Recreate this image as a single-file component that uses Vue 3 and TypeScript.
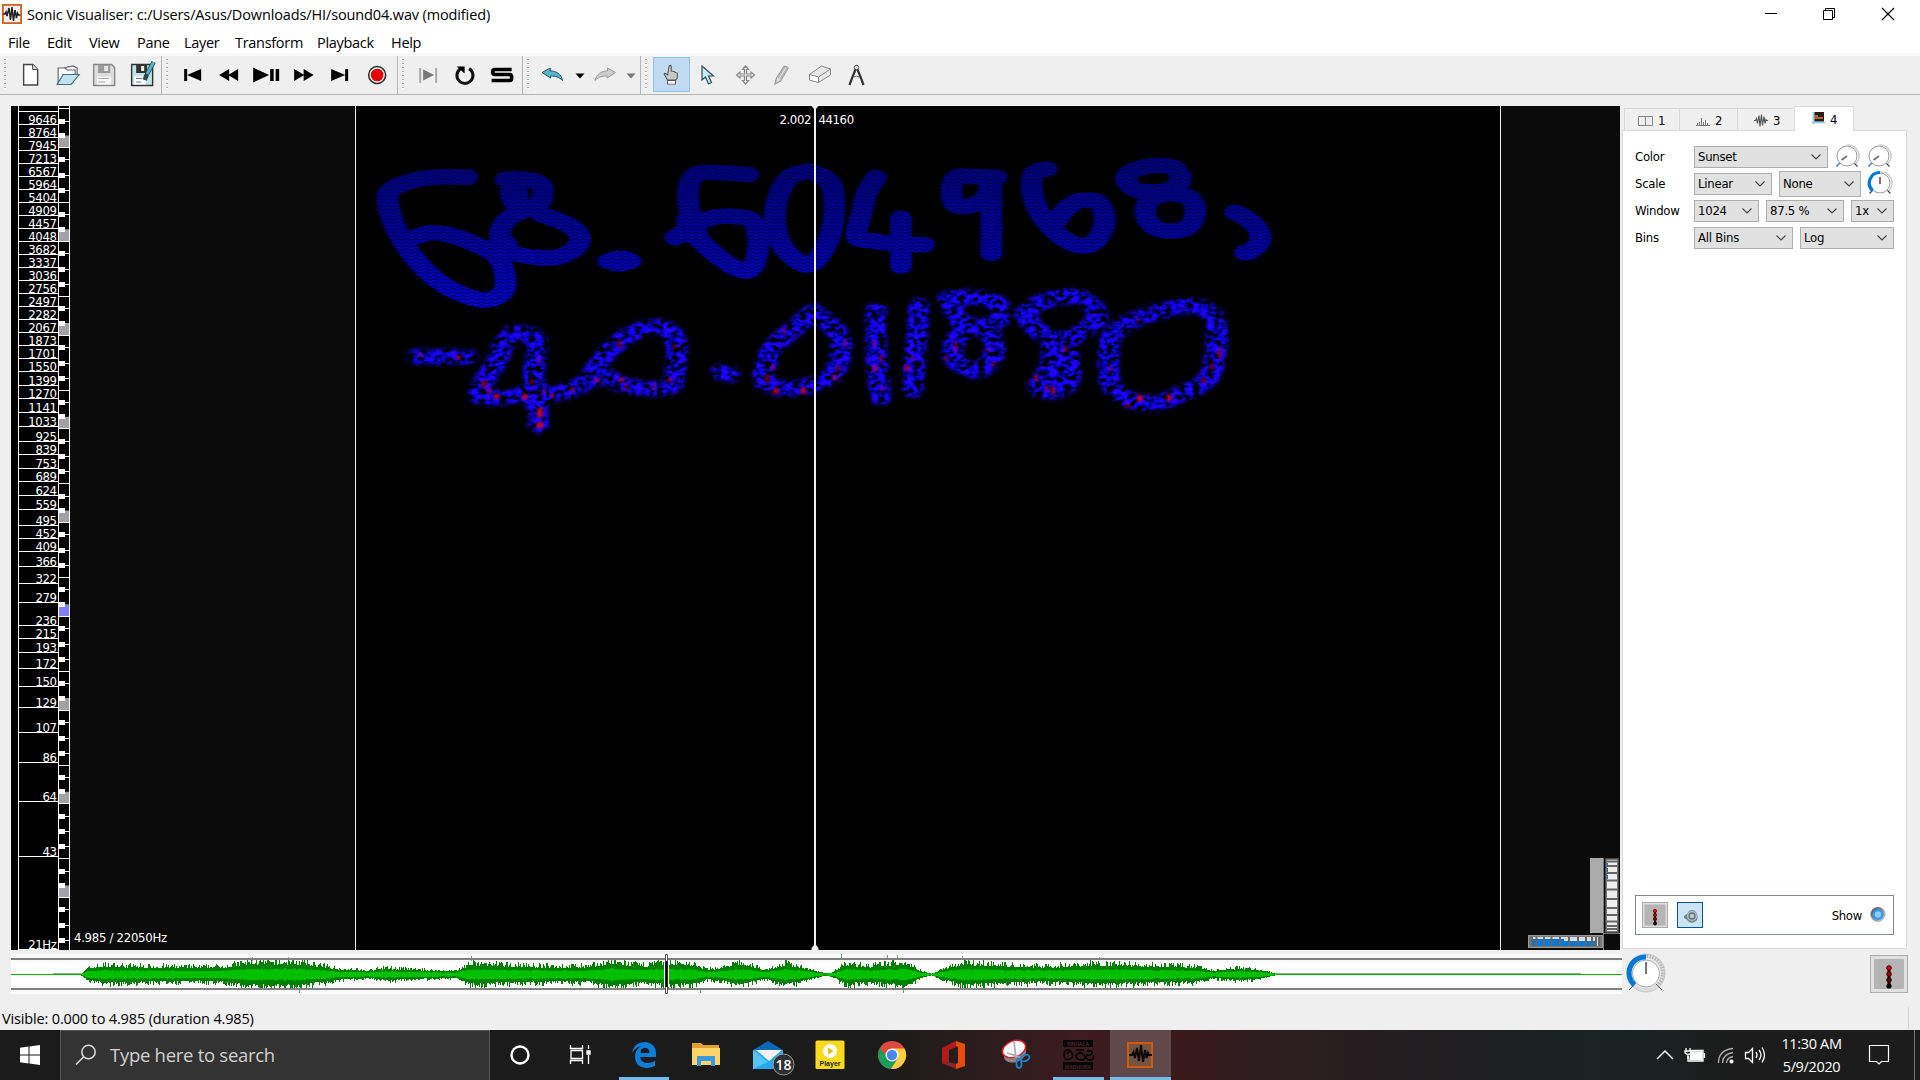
<script setup lang="ts">
type Pt = [number, number]

const menus = [
  { name: 'File', w: 39 }, { name: 'Edit', w: 42 }, { name: 'View', w: 48 }, { name: 'Pane', w: 47 },
  { name: 'Layer', w: 51 }, { name: 'Transform', w: 82 }, { name: 'Playback', w: 74 }, { name: 'Help', w: 40 },
]

// Frequency scale: label and the y of the rule below it
const scale: [string, number][] = [
  ['', 111], ['9646', 124], ['8764', 137], ['7945', 150], ['7213', 163], ['6567', 176], ['5964', 189], ['5404', 202],
  ['4909', 215], ['4457', 228], ['4048', 241], ['3682', 254], ['3337', 267], ['3036', 280], ['2756', 293], ['2497', 306],
  ['2282', 319], ['2067', 332], ['1873', 345], ['1701', 358], ['1550', 371], ['1399', 385], ['1270', 398], ['1141', 412],
  ['1033', 426], ['925', 441], ['839', 454], ['753', 468], ['689', 481], ['624', 495], ['559', 509], ['495', 525],
  ['452', 538], ['409', 551], ['366', 566], ['322', 583], ['279', 602], ['236', 625], ['215', 638], ['193', 652],
  ['172', 668], ['150', 686], ['129', 707], ['107', 732], ['86', 762], ['64', 801], ['43', 856], ['21Hz', 949],
]

// Piano strip: one octave is 93.75px tall
const octaves = Array.from({ length: 10 }, (_, i) => 135 + (i - 1) * 93.75)
const blackKeys = [0, 24.3, 40, 55, 79.3]
const whiteLines = [12, 67]

const BRUSH = 1.4
function stroke(points: Pt[]): string {
  const p = points.map(([x, y]): Pt => [x / BRUSH, y])
  let d = `M${p[0][0].toFixed(1)} ${p[0][1]}`
  for (let i = 0; i < p.length - 1; i++) {
    const a = p[Math.max(0, i - 1)]
    const b = p[i]
    const c = p[i + 1]
    const e = p[Math.min(p.length - 1, i + 2)]
    const c1 = [b[0] + (c[0] - a[0]) / 6, b[1] + (c[1] - a[1]) / 6]
    const c2 = [c[0] - (e[0] - b[0]) / 6, c[1] - (e[1] - b[1]) / 6]
    d += `C${c1[0].toFixed(1)} ${c1[1].toFixed(1)} ${c2[0].toFixed(1)} ${c2[1].toFixed(1)} ${c[0].toFixed(1)} ${c[1].toFixed(1)}`
  }
  return d
}
const shift = (pts: Pt[]): Pt[] => pts.map(([x, y]): Pt => [x + 1380, y])

const upper = ([
  [[322, 111], [230, 111], [140, 127], [88, 155], [86, 200], [110, 270], [160, 350], [230, 420], [310, 465], [380, 480], [430, 455], [434, 400], [410, 348], [340, 310], [270, 285], [210, 278], [170, 290]],
  [[436, 118], [500, 118], [540, 132], [549, 165], [530, 195], [490, 205], [460, 185], [452, 145], [455, 125]],
  [[470, 140], [475, 190]],
  [[500, 205], [440, 240], [420, 290], [450, 335], [530, 352], [600, 350], [650, 320], [658, 285], [620, 252], [550, 225], [510, 200]],
  [[395, 325], [440, 310]],
  [[745, 363], [780, 360], [812, 364]], [[765, 356], [795, 356]], [[768, 371], [790, 371]],
  [[1165, 103], [1080, 98], [1015, 100], [988, 130], [985, 190], [1000, 250], [1020, 300], [1075, 350], [1135, 388], [1172, 388], [1192, 340], [1192, 270], [1160, 234], [1060, 232], [990, 265], [945, 293]],
  [[980, 240], [1000, 290]],
  [[1350, 93], [1290, 110], [1255, 170], [1245, 240], [1262, 310], [1310, 362], [1350, 374], [1388, 335], [1415, 270], [1423, 190], [1408, 125], [1350, 93]],
  [[1190, 280], [1250, 270]],
] as Pt[][]).concat(([
  [[168, 113], [140, 160], [125, 220], [110, 290], [160, 303], [240, 313], [312, 314]],
  [[243, 235], [243, 378]],
  [[530, 112], [470, 110], [410, 112], [395, 150], [405, 193], [450, 197], [500, 170], [508, 130]],
  [[514, 115], [514, 230], [514, 340]],
  [[680, 87], [645, 97], [635, 140], [650, 200], [690, 260], [750, 307], [810, 315], [848, 270], [852, 220], [830, 185], [780, 182], [740, 205], [712, 240]],
  [[1078, 105], [1060, 82], [1000, 77], [940, 92], [918, 118], [950, 150], [1020, 155], [1075, 135], [1082, 105]],
  [[1040, 160], [990, 180], [976, 220], [1000, 260], [1050, 273], [1105, 260], [1127, 215], [1110, 175], [1060, 160]],
  [[1245, 217], [1280, 235], [1312, 265], [1320, 305], [1290, 334], [1275, 338]],
] as Pt[][]).map(shift)).map(stroke)

const lower = ([
  [[172, 650], [322, 650]],
  [[462, 577], [430, 615], [408, 670], [375, 720], [360, 768], [420, 772], [490, 765], [560, 765], [640, 745], [700, 715]],
  [[470, 577], [530, 600], [522, 690], [530, 780], [535, 855]],
  [[700, 700], [740, 640], [800, 590], [870, 560], [930, 572], [950, 620], [945, 700], [930, 740], [860, 745], [790, 735], [740, 710], [700, 690]],
  [[1083, 696], [1110, 704]],
  [[1360, 515], [1310, 560], [1250, 610], [1222, 660], [1213, 725], [1270, 745], [1360, 735], [1420, 700], [1443, 640], [1440, 590], [1400, 545], [1360, 515]],
] as Pt[][]).concat(([
  [[168, 512], [168, 640], [183, 772]],
  [[298, 498], [290, 600], [278, 750]],
  [[385, 475], [470, 472], [530, 490], [548, 525], [510, 552], [450, 558], [410, 530], [390, 480]],
  [[440, 560], [400, 615], [408, 665], [470, 692], [518, 655], [520, 600], [480, 560]],
  [[740, 468], [680, 480], [622, 515], [640, 560], [700, 595], [760, 590], [820, 550], [830, 515], [790, 478], [740, 468]],
  [[700, 600], [690, 680], [655, 740], [690, 755], [740, 735], [752, 680], [730, 600]],
  [[705, 650], [715, 740]],
  [[1085, 498], [1000, 520], [920, 550], [875, 590], [866, 660], [872, 730], [930, 780], [1010, 788], [1100, 755], [1165, 715], [1187, 640], [1190, 560], [1160, 508], [1085, 498]],
] as Pt[][]).map(shift)).map(stroke)

// Loudest bins, drawn in red: x, y, rx, ry, opacity
const peaks: number[][] = [
  [410, 769, 9, 8, .85], [495, 770, 9, 9, .85], [540, 818, 8, 15, .95], [540, 855, 10, 10, .95], [577, 768, 7, 7, .6],
  [710, 720, 9, 6, .65], [785, 720, 9, 8, .6], [930, 720, 9, 6, .55], [1248, 752, 9, 9, .8], [1330, 752, 9, 10, .8],
  [373, 733, 10, 12, .5], [388, 752, 8, 8, .5], [295, 652, 9, 7, .55], [180, 645, 7, 7, .4], [780, 612, 7, 12, .45],
  [1222, 715, 7, 14, .45], [1238, 683, 6, 9, .5], [1272, 573, 6, 10, .4], [945, 620, 7, 7, .45], [882, 742, 6, 12, .4],
  [638, 750, 8, 8, .45], [515, 725, 7, 8, .5], [552, 757, 7, 7, .5], [800, 742, 6, 12, .4], [538, 660, 6, 10, .35],
  [1425, 712, 9, 9, .5], [1435, 685, 8, 8, .5], [1457, 610, 7, 9, .45], [1545, 685, 8, 10, .65], [1563, 655, 6, 12, .45],
  [1543, 610, 6, 9, .45], [1567, 745, 7, 7, .4], [1642, 684, 8, 9, .7], [1657, 655, 6, 8, .45], [1787, 620, 7, 18, .4],
  [1885, 630, 6, 6, .5], [1900, 672, 7, 7, .5], [1758, 655, 6, 7, .5], [2028, 714, 7, 9, .6], [2080, 752, 8, 12, .6],
  [2062, 745, 7, 9, .5], [2115, 628, 7, 9, .5], [2340, 775, 9, 10, .9], [2428, 773, 8, 10, .9], [2579, 640, 6, 17, .6],
  [2305, 795, 8, 7, .5], [2532, 722, 8, 8, .5], [2555, 680, 6, 10, .45], [2252, 685, 7, 8, .4], [2333, 540, 7, 6, .4],
]

// Overview waveform, built from an amplitude envelope
const envelope: Pt[] = [
  [81, .5], [88, 7], [105, 10], [140, 9], [200, 8], [225, 9], [250, 14], [270, 13], [295, 14], [320, 10], [340, 6], [368, 4],
  [385, 7], [420, 5], [455, 3.5], [470, 12], [510, 10], [550, 9], [590, 9], [610, 14], [640, 10], [665, 13], [690, 12], [705, 6],
  [720, 7], [740, 13], [765, 5], [785, 12], [800, 9], [824, 1], [832, 2], [845, 12], [870, 9], [905, 14], [920, 4], [931, .5],
  [945, 7], [965, 13], [1010, 10], [1050, 9], [1100, 12], [1150, 10], [1195, 9], [1212, 4], [1240, 7], [1260, 5], [1275, .5],
]
function amp(x: number): number {
  for (let i = 1; i < envelope.length; i++) {
    const [x0, a0] = envelope[i - 1]
    const [x1, a1] = envelope[i]
    if (x <= x1) return a0 + ((a1 - a0) * (x - x0)) / (x1 - x0)
  }
  return 0
}
let seed = 7
function rand(): number {
  seed = (seed * 16807) % 2147483647
  return seed / 2147483647
}
let peakPath = ''
let meanPath = ''
for (let x = 81; x <= 1275; x++) {
  const a = amp(x)
  const up = Math.min(14, Math.round(a * (.68 + rand() ** 2 * .55)))
  const down = Math.min(13, Math.round(a * (.68 + rand() ** 2 * .55)))
  const m = Math.round(a * (.32 + rand() * .1))
  peakPath += `M${x + .5} ${974 - up}V${975 + down}`
  meanPath += `M${x + .5} ${974 - m}V${975 + m}`
}

interface Combo { text: string; w: number; tall?: boolean }
const rows: { label: string; combos: Combo[]; dials: string[] }[] = [
  { label: 'Color', combos: [{ text: 'Sunset', w: 134 }], dials: ['low', 'low'] },
  { label: 'Scale', combos: [{ text: 'Linear', w: 78 }, { text: 'None', w: 82, tall: true }], dials: ['mid'] },
  { label: 'Window', combos: [{ text: '1024', w: 65 }, { text: '87.5 %', w: 78 }, { text: '1x', w: 43 }], dials: [] },
  { label: 'Bins', combos: [{ text: 'All Bins', w: 99 }, { text: 'Log', w: 94 }], dials: [] },
]
const ticks = Array.from({ length: 14 }, (_, i) => 5 + i * 9.5)
</script>

<template>
  <div class="screen">
    <header class="title">
      <svg width="20" height="20" viewBox="0 0 20 20"><rect x=".9" y=".9" width="18.2" height="18.2" fill="#f4f0ec" stroke="#d2601c" stroke-width="1.8"/><path d="M1 10h2l1-2 1 4 2-8 1.500 12 1.500-13 1.500 14 1.500-11 1.500 8 1-5 1 2h2" fill="none" stroke="#222" stroke-width="1.5"/></svg>
      <span class="caption">Sonic Visualiser: c:/Users/Asus/Downloads/HI/sound04.wav (modified)</span>
      <svg class="winbtns" width="160" height="28" viewBox="1760 0 160 28" fill="none" stroke="#000"><path d="M1765 13.500h12M1823.500 10.500h9v9h-9zM1825.500 10.500v-2h9v9h-2"/><path d="M1882 8l12 12M1894 8l-12 12" stroke-width="1.2"/></svg>
    </header>
    <nav class="menu"><span v-for="m in menus" :key="m.name" :style="{ width: m.w + 'px' }">{{ m.name }}</span></nav>

    <div class="toolbar">
      <div class="group g1"><i class="grip"/>
        <svg class="tb" viewBox="-1 0 37 38"><path d="M11.500 8.500h9l5 5v15.500h-14z" fill="#fff" stroke="#444" stroke-width="1.4"/><path d="M20.500 8.500v5h5" fill="#ddd" stroke="#444"/></svg>
        <svg class="tb" viewBox="-1 0 37 38"><path d="M9 28.500V12h7l2 2h8v5M14 12l10-2 4 2v6" fill="#fff" stroke="#667" stroke-width="1.2"/><path d="M8 28.500l6-10h16l-8 10z" fill="#bfe4f0" stroke="#456a78" stroke-width="1.2"/></svg>
        <svg class="tb" viewBox="1 0 37 38"><path d="M8.500 8.500h18l3 3v18h-21z" fill="#ddd" stroke="#888" stroke-width="1.4"/><path d="M13 9h12v8H13z" fill="#999"/><path d="M19 10h4v5h-4z" fill="#e8e8e8"/><path d="M12 20.500h14v8H12z" fill="#f6f6f6"/><path d="M13 22.500h11M13 26h7" stroke="#aaa"/></svg>
        <svg class="tb" viewBox="0 0 37 38"><path d="M8.500 8.500h18l3 3v18h-21z" fill="#c4e3ed" stroke="#333" stroke-width="1.4"/><path d="M13 9h11v8H13z" fill="#333"/><path d="M18 10h3v5h-3z" fill="#eee"/><path d="M11 20.500h12v8H11z" fill="#fff"/><path d="M13 22.500h6M13 26h5" stroke="#777"/><path d="M30.500 6l-7 13-2 5" stroke="#34454d" stroke-width="4.500" fill="none"/><path d="M30.500 6l-6.500 12" stroke="#4bb2cf" stroke-width="2.800"/></svg>
      </div>
      <div class="group g2"><i class="grip"/>
        <svg class="tb" viewBox="0 0 37 38"><path d="M11 13h3v12h-3zM28 13v12L14 19z"/></svg>
        <svg class="tb" viewBox="0 0 37 38"><path d="M19 13v12L9 19zM28 13v12L18 19z"/></svg>
        <svg class="tb" viewBox="0 0 37 38"><path d="M5 11.500v15L21 19zM22 13h3.500v12H22zM27.500 13H31v12h-3.500z"/></svg>
        <svg class="tb" viewBox="0 0 37 38"><path d="M9 13v12l10-6zM18.500 13v12l10-6z"/></svg>
        <svg class="tb" viewBox="0 0 37 38"><path d="M9 13v12l14-6zM23 13h3v12h-3z"/></svg>
        <svg class="tb" viewBox="0 0 37 38"><circle cx="18" cy="19" r="8.500" fill="#eee" stroke="#292929" stroke-width="1.5"/><circle cx="18" cy="19" r="6.300" fill="#e50000"/></svg>
      </div>
      <div class="group g3"><i class="grip"/>
        <svg class="tb" viewBox="0 0 37 38"><path d="M10 12h2v15h-2zM26 12h2v15h-2z" fill="#aaa"/><path d="M14 13.500v11l11-5.500z" fill="#777"/></svg>
        <svg class="tb" viewBox="0 0 37 38"><path d="M14 13A8 8 0 1 0 23 12.600" fill="none" stroke="#111" stroke-width="3"/><path d="M10.500 10.500h8v7z"/></svg>
        <svg class="tb" viewBox="1 0 37 38"><path d="M28.500 13.500H12q-2.500 0-2.500 2.500t2.500 2.500h14.500q2 0 2 3t-2 3H8.500" fill="none" stroke="#000" stroke-width="3.700"/></svg>
      </div>
      <div class="group g4"><i class="grip"/>
        <svg class="tb" viewBox="0 0 37 38"><path d="M8 16.500l8-4.500v3c6 0 11 3 12.500 9.500-4-3.500-7-4.500-12-4.500v2z" fill="#52b8d4" stroke="#27505d"/></svg>
        <svg class="tb arrow" viewBox="0 0 18 38"><path d="M4.500 17.500h9l-4.500 5z"/></svg>
        <svg class="tb redo" viewBox="0 0 33 38"><path d="M26.500 16.500l-8-4.500v3c-6 0-11 3-12.500 9.500 4-3.500 7-4.500 12-4.500v2z" fill="#ccc" stroke="#9a9a9a"/></svg>
        <svg class="tb arrow" viewBox="0 0 18 38"><path d="M4.500 17.500h9l-4.500 5z" fill="#777"/></svg>
      </div>
      <div class="group g5"><i class="grip"/>
        <svg class="tb on" viewBox="0 0 37 38"><path d="M14 25.500l-4-7q1-2 4 1V20l1.700-10.500q1.600-2 2.500 0V15l3 .5 4 2v5.500l-2 2.500zM14 26h9v4h-9z" fill="#c8c8c8" stroke="#555" stroke-width="1.2"/><path d="M14.500 26.500h8v3h-8z" fill="#fff"/></svg>
        <svg class="tb" viewBox="1 0 37 38"><path d="M13 10v14l3.500-3 3 7 3-1.500-3-6.500h5z" fill="#c4edf5" stroke="#334b53" stroke-width="1.2"/></svg>
        <svg class="tb" viewBox="0 0 37 38"><path d="M18.500 10l3 3.500h-2V18h4.500v-2l3.500 3-3.500 3v-2h-4.500v4.500h2l-3 3.500-3-3.500h2V20H13v2l-3.500-3 3.500-3v2h4.500v-4.500h-2z" fill="#eee" stroke="#888" stroke-width="1.2"/></svg>
        <svg class="tb" viewBox="1 0 37 38"><path d="M12 28l1.500-6L21 10.500q3-.5 4 2L17.500 25z" fill="#ddd" stroke="#a0a0a0" stroke-width="1.3"/><path d="M15 22L22 11M17 23l7-11" stroke="#aaa"/></svg>
        <svg class="tb" viewBox="0 0 37 38"><path d="M8.500 18.500l12-8.500 9 3v6l-12 7.500-9-2.500z" fill="#e6e6e6" stroke="#888"/><path d="M8.500 18.500l9 2.500 12-8M17.500 21v5.500" fill="none" stroke="#888"/><path d="M9.200 19.200l7.800 2.300v4.200l-7.800-2.200z" fill="#fff"/></svg>
        <svg class="tb" viewBox="0 0 37 38"><circle cx="18.500" cy="11.500" r="2.200" fill="#eee" stroke="#444"/><path d="M17.500 13.500l-4 10-2 5.500M19.500 13.500l4 10 2 5.500" stroke="#333" stroke-width="2.200" fill="none"/><path d="M16 21q2.500-2 5 0" fill="none" stroke="#777"/></svg>
      </div>
    </div>

    <main class="work">
      <svg class="pane" width="1609" height="844" viewBox="11 106 1609 844">
        <defs>
          <filter id="noise" filterUnits="userSpaceOnUse" x="380" y="280" width="900" height="160" color-interpolation-filters="sRGB">
            <feTurbulence type="fractalNoise" baseFrequency=".14 .21" numOctaves="2" seed="4" result="t"/>
            <feColorMatrix in="t" values="0.5 0 0 0 -0.22  0 0 0 0 0  3.7 0 0 0 -1.2  0 0 0 0 1" result="c"/>
            <feGaussianBlur in="SourceAlpha" stdDeviation="2.3" result="s"/>
            <feComposite in="c" in2="s" operator="in"/>
          </filter>
          <filter id="soft" filterUnits="userSpaceOnUse" x="360" y="140" width="940" height="190"><feGaussianBlur stdDeviation="1.3 .3"/></filter>
          <filter id="spot" filterUnits="userSpaceOnUse" x="360" y="280" width="940" height="160"><feGaussianBlur stdDeviation=".9"/></filter>
          <linearGradient id="depth" gradientUnits="userSpaceOnUse" x1="0" y1="70" x2="0" y2="500"><stop offset="0" stop-color="#00004a"/><stop offset="1" stop-color="#000048"/></linearGradient>
          <linearGradient id="hi" gradientUnits="userSpaceOnUse" x1="0" y1="70" x2="0" y2="500"><stop offset="0" stop-color="#000088"/><stop offset=".5" stop-color="#0000b8"/><stop offset="1" stop-color="#0808ff"/></linearGradient>
          <pattern id="zig" patternUnits="userSpaceOnUse" width="20" height="10"><path d="M-10 7L0 0l10 7 10-7 10 7M-10 17L0 10l10 7 10-7 10 7M-10-3L0-10l10 7 10-7 10 7" fill="none" stroke="#fff" stroke-width="4.200"/></pattern>
          <mask id="weave" maskUnits="userSpaceOnUse" x="0" y="0" width="2100" height="600"><rect width="2100" height="600" fill="url(#zig)"/></mask>
        </defs>
        <rect x="11" y="106" width="1609" height="844" fill="#0b0b0b"/>
        <rect x="355" y="106" width="1146" height="844" fill="#000"/>
        <path d="M355.500 106v844M1500.500 106v844" stroke="#f0f0f0"/>

        <g filter="url(#soft)" fill="none" stroke-linecap="round" stroke-linejoin="round">
          <g transform="translate(360 140) scale(.46667 .33333)">
            <path v-for="(d, i) in upper" :key="i" :d="d" stroke="url(#depth)" stroke-width="47"/>
            <g mask="url(#weave)"><path v-for="(d, i) in upper" :key="i" :d="d" stroke="url(#hi)" stroke-width="46"/></g>
          </g>
        </g>
        <g filter="url(#noise)" fill="none" stroke-linecap="round" stroke-linejoin="round">
          <g transform="translate(360 140) scale(.46667 .33333)"><path v-for="(d, i) in lower" :key="i" :d="d" stroke="#00f" stroke-width="46"/></g>
        </g>
        <g filter="url(#spot)"><g transform="translate(360 140) scale(.33333)">
          <ellipse v-for="(p, i) in peaks" :key="i" :cx="p[0]" :cy="p[1]" :rx="p[2]" :ry="p[3]" :opacity="p[4]" fill="#d8001c"/>
        </g></g>

        <path d="M814 106h2v844h-2zM811.500 106h7l-3.500 4zM811.500 950v-2l3.500-4 3.500 4v2z" fill="#f0f0f0"/>
        <text class="mono" x="811" y="124" text-anchor="end">2.002</text>
        <text class="mono" x="818.500" y="124">44160</text>
        <text class="mono foot" x="74" y="942">4.985 / 22050Hz</text>

        <rect x="11" y="106" width="58" height="844" fill="#000"/>
        <path d="M18.500 106v844M58.500 106v844M69.500 106v844" stroke="#fff"/>
        <g v-for="s in scale" :key="s[1]">
          <path :d="`M18 ${s[1] + .5}h41`" stroke="#fff"/>
          <text class="mono" x="56.500" :y="s[1] - .5" text-anchor="end">{{ s[0] }}</text>
        </g>
        <g v-for="(o, i) in octaves" :key="i">
          <rect x="59" :y="o + .5" width="10" height="12" :fill="i === 6 ? '#8080ff' : '#a2a2a6'"/>
          <path v-for="w in whiteLines" :key="w" :d="`M59 ${Math.round(o + w) + .5}h10`" stroke="#fff"/>
          <template v-for="b in blackKeys" :key="b">
            <rect x="59" :y="Math.round(o + b) - 2" width="6" height="5" fill="#fff"/>
            <path v-if="b" :d="`M65 ${Math.round(o + b) + .5}h4`" stroke="#fff"/>
          </template>
        </g>

        <rect x="1590" y="858" width="13" height="75" fill="#aaa"/>
        <path d="M1603.500 858v92M1603 933.500h17" stroke="#777"/>
        <rect x="1605.500" y="858.500" width="13" height="74" fill="#777" stroke="#444"/>
        <rect x="1607" y="860" width="10" height="71" fill="#eee"/>
        <path d="M1607 861.500h10M1607 866h10M1607 873h10M1607 880.500h10M1607 889.500h10M1607 899h10M1607 908h10M1607 915h10M1607 921.500h10M1607 926h10M1607 929h10" stroke="#666" stroke-width="2"/>
        <path d="M1607.500 863v3M1607.500 868v4M1607.500 875v4" stroke="#0078d7"/>
        <rect x="1528.500" y="935.500" width="74" height="12" fill="#777" stroke="#999"/>
        <rect x="1531" y="937" width="69" height="9" fill="#ddd"/><rect x="1533" y="939" width="31" height="7" fill="#0078d7"/><rect x="1563" y="941" width="34" height="5" fill="#0078d7"/>
        <path d="M1532 937v9M1536.500 937v9M1544 937v9M1551.500 937v9M1560 937v9M1569 937v9M1578 937v9M1586 937v9M1592 937v9M1596 937v9M1599 937v9" stroke="#666" stroke-width="2"/>
      </svg>

      <aside class="side">
        <div class="tabs">
          <div class="tab t1"><svg width="15" height="12" viewBox="0 0 15 12"><path d="M.5 1.500h14v9H.5zM7.500 1.500v9" fill="#eee" stroke="#888"/></svg>1</div>
          <div class="tab t2"><svg width="14" height="12" viewBox="0 0 14 12"><path d="M0 10.500h14M1.500 10V8M3.500 10V7M5.500 10V3M7.500 10V7M9.500 10V5M11.500 10V8" stroke="#777"/></svg>2</div>
          <div class="tab t3"><svg width="14" height="13" viewBox="0 0 14 13"><path d="M0 6.500h1.500l1-2 1 5 1.500-8 1 11L7.500.5l1 11 1.500-9 1 7 1-4 .5 1h1.500" stroke="#555" fill="none" stroke-width="1.100"/></svg>3</div>
          <div class="tab t4"><svg width="13" height="12" viewBox="0 0 13 12"><path d="M1.500 0v12M0 10.500h13" stroke="#8fd6ea" stroke-width="2"/><path d="M2.500 0H12v9.500H2.500z" fill="#2a1c12"/><path d="M3 3h3v2h5v2H3z" fill="#b5651d"/></svg>4</div>
        </div>
        <section class="props">
          <div v-for="r in rows" :key="r.label" class="row">
            <label>{{ r.label }}</label>
            <div v-for="c in r.combos" :key="c.text" class="combo" :class="{ tall: c.tall }" :style="{ width: c.w + 'px' }">
              <span>{{ c.text }}</span><svg width="10" height="6" viewBox="0 0 10 6"><path d="M.5.5L5 5 9.500.5" fill="none" stroke="#444" stroke-width="1.100"/></svg>
            </div>
            <svg v-for="(k, i) in r.dials" :key="i" class="dial" width="26" height="26" viewBox="0 0 26 26" fill="none">
              <circle cx="13" cy="14" r="10" fill="#fff" stroke="#999"/><path d="M13 3A11 11 0 0 1 21.500 22" stroke="#ccc" stroke-width="1.500"/>
              <path d="M20.500 21.500l3 3M5.500 21.500l-3 3" stroke="#444" stroke-width="1.200"/>
              <path v-if="k === 'low'" d="M13 14l-5.500 4" stroke="#777" stroke-width="2"/>
              <path v-if="k === 'low'" d="M6 20.500l-3 3" stroke="#5ba7e6" stroke-width="1.500"/>
              <template v-else><path d="M13 3.500A10.500 10.500 0 0 0 5.500 21.500" stroke="#0078d7" stroke-width="3.200"/><path d="M13 8v7" stroke="#777" stroke-width="2"/></template>
            </svg>
          </div>
          <div class="playbox">
            <svg width="26" height="26" viewBox="0 0 26 26"><rect x=".5" y=".5" width="25" height="25" fill="#ddd" stroke="#aaa"/><rect x="2.500" y="2.500" width="21" height="21" fill="#b4b4b4"/><path d="M13 8v13" stroke="#400" stroke-width="2"/><circle cx="13" cy="9" r="1.700" fill="#e00" stroke="#300" stroke-width=".6"/><circle cx="13" cy="13" r="1.700" fill="#a00" stroke="#300" stroke-width=".6"/><circle cx="13" cy="17" r="1.700" fill="#600" stroke="#300" stroke-width=".6"/><circle cx="13" cy="21.500" r="2"/></svg>
            <svg width="26" height="26" viewBox="0 0 26 26"><rect x=".5" y=".5" width="25" height="25" fill="#cce4f7" stroke="#005499"/><path d="M7 14q3-1 5-5 3-2 6 0 4 4 2 9-3 4-8 2-2-3-5-4z" fill="#74858c"/><circle cx="15" cy="14" r="5" fill="#b9c8cd"/><circle cx="15" cy="14" r="3" fill="none" stroke="#61727a" stroke-width="1.300"/></svg>
            <span>Show</span>
            <svg width="18" height="18" viewBox="0 0 18 18"><defs><linearGradient id="rim" x2="1" y2="1"><stop stop-color="#444"/><stop offset="1" stop-color="#ddd"/></linearGradient></defs><circle cx="9" cy="8.500" r="7.500" fill="url(#rim)"/><circle cx="9" cy="8.500" r="5.400" fill="#2f98f8"/><circle cx="9" cy="8.500" r="3.200" fill="#8ecbff"/></svg>
          </div>
        </section>
      </aside>
    </main>

    <div class="overview">
      <svg width="1611" height="40" viewBox="11 954 1611 40">
        <rect x="11" y="954" width="1611" height="40" fill="#fafafa"/><rect x="11" y="963" width="1611" height="22" fill="#fff"/>
        <path d="M11 974.500h1611" stroke="#00b400"/><path d="M53 973.500h29M1275 973.500h306" stroke="#8ab58a"/>
        <path d="M252.500 957v4M288.500 957v4M299.500 988v5M471.500 956v5M700.500 988v5M841.500 954v6M887.500 955v5M897.500 955v5M903.500 989v4M962.500 956v4M1099.500 957v3" stroke="#60a860"/>
        <path d="M11 959h1611M11 989h1611" stroke="#808080" stroke-width="2"/>
        <path :d="peakPath" stroke="#008000"/><path :d="meanPath" stroke="#00c000"/>
        <path d="M664.500 961v26M668.500 961v26" stroke="#fff"/><path d="M665.500 954.500h2v39h-2z" fill="#fff" stroke="#555"/><path d="M666.500 961v26" stroke="#000" stroke-width="2"/>
      </svg>
      <svg class="bigdial" width="42" height="42" viewBox="1625 952 42 42" fill="none">
        <circle cx="1646" cy="973" r="17" stroke="#ddd" stroke-width="4"/>
        <path v-for="t in ticks" :key="t" d="M1646 954v4" stroke="#aaa" :transform="`rotate(${t} 1646 973)`"/>
        <circle cx="1646" cy="973.500" r="13.500" fill="#fff" stroke="#aaa"/><circle cx="1646" cy="973" r="19" stroke="#bbb" stroke-width=".7"/>
        <path d="M1646 957A16 16 0 0 0 1634.500 985" stroke="#0078d7" stroke-width="5"/><path d="M1633 986l-4 4M1656 984l6 6" stroke="#555"/><path d="M1646 962v12" stroke="#777" stroke-width="2"/>
      </svg>
      <svg class="level" width="38" height="38" viewBox="0 0 38 38"><rect x=".5" y=".5" width="37" height="37" fill="#e1e1e1" stroke="#adadad"/><rect x="4" y="4" width="30" height="30" rx="1" fill="#b4b4b4"/><path d="M19 12v20" stroke="#300" stroke-width="3"/><circle cx="19" cy="13" r="2.300" fill="#e00" stroke="#300"/><circle cx="19" cy="19" r="2.300" fill="#a00" stroke="#300"/><circle cx="19" cy="25" r="2.300" fill="#600" stroke="#200"/><circle cx="19" cy="31" r="2.600"/></svg>
    </div>

    <footer class="status"><span>Visible: 0.000 to 4.985 (duration 4.985)</span></footer>

    <div class="taskbar">
      <div class="start"><svg width="20" height="20" viewBox="0 0 20 20" fill="#fff"><path d="M0 2.800L8.500 1.600v7.900H0zM9.500 1.500L20 0v9.500H9.500zM0 10.500h8.500v7.900L0 17.200zM9.500 10.500H20V20L9.500 18.500z"/></svg></div>
      <div class="search"><svg width="22" height="22" viewBox="0 0 22 22" fill="none" stroke="#ddd" stroke-width="1.500"><circle cx="13.500" cy="8" r="6.700"/><path d="M8.700 12.800L1 20.500"/></svg><span>Type here to search</span></div>
      <svg class="apps" width="682" height="50" viewBox="490 1030 682 50">
        <circle cx="520" cy="1055" r="8.500" fill="none" stroke="#fff" stroke-width="2.400"/>
        <g fill="none" stroke="#fff" stroke-width="1.300"><path d="M570.500 1045v3.500h12v-3.500M570.500 1064v-3.500h12v3.500M571 1050.500h11.500v8H571zM588.500 1045v4M588.500 1055v9"/><path d="M587 1051h3v3h-3z" fill="#fff"/></g>
        <path d="M632 1053q2-11 13-11 11 1 11 12v3h-16q1 6 8 6 4 0 7-2v5q-4 2-9 2-11-1-11-11 0-7 6-11-5 1-9 7zM640.500 1053h9q0-5-4.500-5t-4.500 5z" fill="#0b7fd8" fill-rule="evenodd"/>
        <path d="M692 1043h9l2 2h16v20h-27z" fill="#e0a030"/><path d="M692 1048h28v17h-28z" fill="#ffd568"/><path d="M697 1066v-10h18v10h-4v-5h-10v5z" fill="#3a99dd"/>
        <path d="M753 1050l15-9 15 9v19h-30z" fill="#0a68b5"/><path d="M753 1050h30v19h-30z" fill="#25a8ee"/><path d="M756 1050h26l-13 11z" fill="#f3f3f3"/><path d="M753 1050l15 12-15 7z" fill="#55c4f7"/>
        <circle cx="783.500" cy="1064.500" r="10.500" fill="#303030" stroke="#999"/><text x="783.500" y="1069.500" class="badge" text-anchor="middle">18</text>
        <rect x="815.500" y="1040.500" width="29" height="28.500" rx="1.500" fill="#fbd91c"/><circle cx="830" cy="1051" r="7" fill="#fff"/><path d="M828 1047.500v7l5.500-3.500z" fill="#e5bd00"/><text x="830" y="1066" class="player" text-anchor="middle">Player</text>
        <circle cx="892" cy="1055" r="14" fill="#dd4b3e"/><path d="M880 1048a14 14 0 0 0 11 21l7-11-6-3-6 1z" fill="#199f58"/><path d="M892 1048.500h12.500A14 14 0 0 1 891 1069l7-11z" fill="#fdce42"/><circle cx="892" cy="1055" r="6.500" fill="#fff"/><circle cx="892" cy="1055" r="5.200" fill="#4688f1"/>
        <path d="M942 1048l14-7v6l-7 3v12l-7 2z" fill="#b31b1b"/><path d="M956 1041l9 3v22l-9 3v-5l2-1v-16l-2-1z" fill="#e84b0b"/><path d="M942 1063l6-1 8 2v5z" fill="#8d2424"/>
        <g transform="rotate(-22 1014 1049)"><ellipse cx="1013" cy="1054" rx="11.500" ry="8" fill="#8d8585"/><ellipse cx="1014" cy="1049" rx="12" ry="8" fill="#fff" stroke="#db1d2c" stroke-width="1.500"/></g><path d="M1014 1042l2 16M1007 1053l13 4" stroke="#aaa" stroke-width="1.700"/><g fill="none" stroke="#1685d0" stroke-width="1.800"><ellipse cx="1019" cy="1063.500" rx="2.500" ry="4.500"/><ellipse cx="1025" cy="1058" rx="4.500" ry="3" transform="rotate(-20 1025 1058)"/></g>
        <g fill="#090707"><path d="M1063 1040h30v7h-30zM1063 1062h30v8h-30z"/></g><g fill="none" stroke="#0b0606" stroke-width="1.800"><path d="M1070 1050q-6-1-6 5t6 4q4-2 2-6t-5 1M1076 1050h8M1076 1055q5-4 8 0t-2 5q-6 0-6-5M1087 1051q6-1 5 2t-5 2q-2 5 3 5t3-5"/></g>
        <text x="1078" y="1046" class="tiny" text-anchor="middle">SINHALA</text><text x="1078" y="1068.500" class="tiny" text-anchor="middle">MADHURA</text>
        <rect x="1110" y="1030" width="61" height="50" fill="#61484a"/><rect x="1128" y="1043" width="24" height="24" fill="#76543f" stroke="#d25b0a" stroke-width="2"/><path d="M1129 1055h3l1.500-3 1.500 6 2-10 2 13 2-16 2 17 2-12 1.500 8 1.500-5 1 2h3" fill="none" stroke="#0a0a0a" stroke-width="2"/>
        <path d="M619 1077h50v3h-50zM1053 1077h51v3h-51zM1110 1077h61v3h-61z" fill="#76b9ed"/>
      </svg>
      <div class="tray">
        <svg width="122" height="50" viewBox="1652 1030 122 50" fill="none" stroke="#fff" stroke-width="1.300">
          <path d="M1657 1059l8-8 8 8" stroke-width="1.500"/>
          <path d="M1690.500 1050.500h12.500v10.500h-15v-5M1704.500 1053v5"/><path d="M1691 1052h11v7.500h-12z" fill="#fff"/><path d="M1686 1048v3M1690 1048v3M1685 1051h6v2q-3 3-6 0zM1688 1055v4"/>
          <g stroke="#aaa"><path d="M1718.500 1063q0-13 14.500-14.500M1722.500 1063q0-9 10.500-10.500M1726.500 1063q0-5 6.500-6.500"/></g><circle cx="1731.500" cy="1061.500" r="1.400" fill="#fff"/>
          <path d="M1745.500 1052.500h3l4-4v14l-4-4h-3zM1756 1052q2 3 0 6M1759 1050q4 5 0 10M1762 1047.500q5 7.500 0 15"/>
        </svg>
        <div class="clock"><span>11:30 AM</span><span>5/9/2020</span></div>
        <svg class="note" width="22" height="22" viewBox="0 0 22 22"><path d="M1.500 1.500h19v16h-7l-2.500 2.500-2.500-2.500h-7z" fill="none" stroke="#fff" stroke-width="1.200"/></svg>
      </div>
    </div>
  </div>
</template>

<style>
body { margin: 0; background: #efefef; overflow: hidden; }
</style>
<style scoped>
.screen { width: 1920px; height: 1080px; display: flex; flex-direction: column; background: #efefef; font-family: "Open Sans", "Noto Sans", sans-serif; color: #000; overflow: hidden; }
svg { display: block; flex: none; }
.title { height: 30px; flex: none; background: #fff; display: flex; align-items: center; box-sizing: border-box; padding: 0 0 2px 2px; }
.caption { margin-left: 5px; font-size: 14.5px; letter-spacing: -.13px; white-space: nowrap; }
.winbtns { margin-left: auto; }
.menu { height: 24px; flex: none; background: #fff; padding-left: 8px; display: flex; font-size: 14.5px; letter-spacing: -.3px; line-height: 25px; }
.toolbar { height: 39px; flex: none; box-sizing: border-box; margin-top: 2px; display: flex; border-bottom: 1px solid #b5b5b5; box-shadow: 0 -1px #fff; }
.group { display: flex; box-sizing: border-box; border-right: 1px solid #b5b5b5; height: 38px; }
.g1 { width: 162px; } .g2 { width: 236px; } .g3 { width: 125px; } .g4 { width: 118px; } .g5 { border: 0; }
.grip { width: 2px; height: 32px; margin: 3px 5px 0 4px; background: repeating-linear-gradient(#aaa 0 1px, #fff 1px 2px, transparent 2px 4px); }
.tb { width: 37.300px; height: 38px; }
.g5 .tb { width: 37px; }
.tb.arrow { width: 18px; } .tb.redo { width: 33px; }
.g5 .grip { margin-right: 6px; }
.g5 .tb.on { width: 35px; height: 33px; margin: 1px 0 0; background: #bfdaf1; border: 1px solid #90c3ee; }
.work { display: flex; height: 855px; flex: none; }
.pane { margin: 11px 0 0 11px; overflow: hidden; }
.mono { font: 13px "DejaVu Sans Condensed", "DejaVu Sans", sans-serif; font-stretch: condensed; letter-spacing: -.4px; fill: #fff; }
.mono.foot { letter-spacing: -.28px; }
.side { width: 285px; margin: 11px 0 0 2px; display: flex; flex-direction: column; font: 13px "DejaVu Sans Condensed", "DejaVu Sans", sans-serif; font-stretch: condensed; letter-spacing: -.25px; }
.tabs { display: flex; align-items: flex-end; padding-left: 2px; height: 24px; }
.tab { box-sizing: border-box; height: 22px; border: 1px solid #d9d9d9; border-bottom: 0; border-right: 0; background: #f0f0f0; display: flex; align-items: center; gap: 5px; padding: 2px 0 0 13px; }
.t1 { width: 55px; } .t2 { width: 58px; padding-left: 16px; } .t3 { width: 57px; padding-left: 16px; }
.t4 { width: 60px; height: 25px; margin-bottom: -1px; background: #fff; border-right: 1px solid #d9d9d9; padding-left: 17px; padding-bottom: 1px; position: relative; }
.t4 svg { margin-top: -4px; }
.props { flex: none; height: 819px; box-sizing: border-box; border: 1px solid #d9d9d9; background: #fff; padding: 12px 0 0 12px; display: flex; flex-direction: column; }
.row { display: flex; align-items: center; height: 27px; gap: 7px; }
.row label { width: 52px; }
.combo { box-sizing: border-box; height: 22px; border: 1px solid #adadad; background: #e1e1e1; display: flex; justify-content: space-between; align-items: center; padding: 0 6px 0 3px; white-space: nowrap; }
.combo.tall { height: 26px; }
.dial { margin: -4px 0 0 -1px; }
.playbox { margin: auto 12px 13px 0; width: 259px; height: 40px; box-sizing: border-box; border: 1px solid #828790; display: flex; align-items: center; padding: 0 6px; gap: 9px; }
.playbox span { margin-left: auto; letter-spacing: -.3px; }
.playbox span + svg { margin-left: -2px; }
.overview { height: 44px; flex: none; display: flex; margin: 1px 0 0 11px; }
.overview > svg:first-child { margin-top: 3px; }
.bigdial { margin: 1px 0 0 3px; }
.level { margin: 4px 0 0 203px; }
.status { flex: 1; display: flex; align-items: flex-end; font-size: 14.5px; letter-spacing: -.15px; }
.status span { box-sizing: border-box; width: 1909px; height: 22px; line-height: 24px; padding-left: 2px; border-right: 1px solid #d5d5d5; margin-bottom: 1px; }
.taskbar { height: 50px; flex: none; display: flex; color: #fff; background: linear-gradient(90deg, #1b1b1b 0 46%, #281c1c 50%, #3c1c20 56%, #39191c 62%, #2c1e20 66%, #231d20 73%, #1b2222 81%, #1a2324 85%, #1c1c1c 90%); }
.start { width: 60px; display: flex; align-items: center; justify-content: center; }
.search { width: 430px; box-sizing: border-box; background: #333; border: 1px solid #575757; border-bottom: 0; display: flex; align-items: center; gap: 13px; padding: 0 0 2px 14px; font-size: 18.500px; letter-spacing: -.28px; color: #d0d0d0; }
.badge { font: 600 14px "Open Sans", sans-serif; fill: #fff; }
.player { font: bold 7px "Liberation Sans", sans-serif; fill: #222; }
.tiny { font: bold 5px "Liberation Sans", sans-serif; fill: #49262a; }
.tray { margin-left: auto; display: flex; align-items: center; width: 268px; }
.clock { width: 75px; display: flex; flex-direction: column; align-items: center; font-size: 14.5px; line-height: 23px; letter-spacing: -.35px; padding-bottom: 1px; }
.note { margin-left: 19px; }
.tray::after { content: ""; width: 1px; height: 50px; background: #777; margin-left: 24px; }
</style>
